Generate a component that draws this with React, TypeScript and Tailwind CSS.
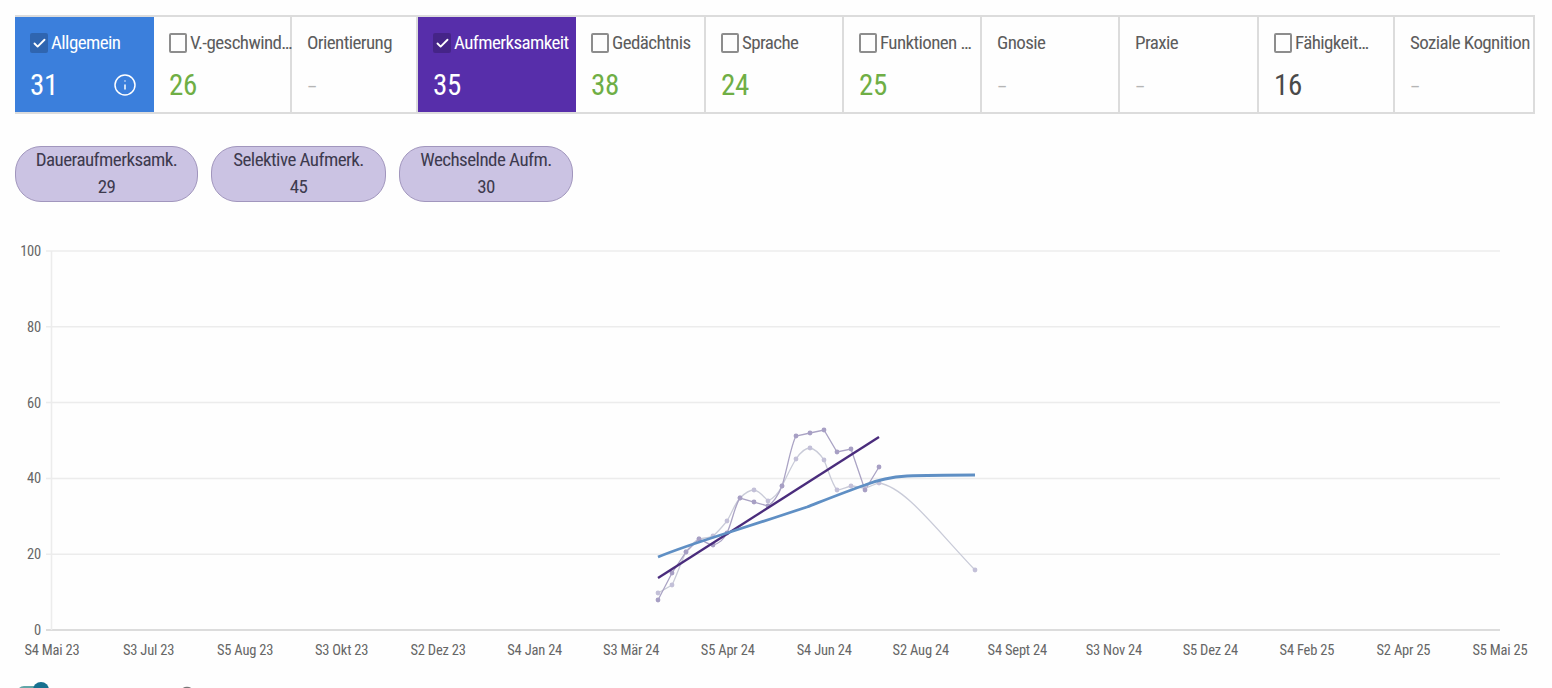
import { Check, Info } from 'lucide-react'

type Tab = {
  label: string
  value: string
  width: string
  checkbox?: boolean
  bg?: string
  valueColor?: string
}

const tabs: Tab[] = [
  { label: 'Allgemein', value: '31', width: 'w-[139px]', checkbox: true, bg: 'bg-[#3b7fdc]' },
  { label: 'V.-geschwind…', value: '26', width: 'w-[138px]', checkbox: true, valueColor: 'text-[#6fae45]' },
  { label: 'Orientierung', value: '–', width: 'w-[126px]' },
  { label: 'Aufmerksamkeit', value: '35', width: 'w-[158px]', checkbox: true, bg: 'bg-[#572eaa]' },
  { label: 'Gedächtnis', value: '38', width: 'w-[130px]', checkbox: true, valueColor: 'text-[#6fae45]' },
  { label: 'Sprache', value: '24', width: 'w-[138px]', checkbox: true, valueColor: 'text-[#6fae45]' },
  { label: 'Funktionen …', value: '25', width: 'w-[138px]', checkbox: true, valueColor: 'text-[#6fae45]' },
  { label: 'Gnosie', value: '–', width: 'w-[138px]' },
  { label: 'Praxie', value: '–', width: 'w-[139px]' },
  { label: 'Fähigkeit…', value: '16', width: 'w-[136px]', checkbox: true, valueColor: 'text-[#4a4a4a]' },
  { label: 'Soziale Kognition', value: '–', width: 'w-[140px]' },
]

const pills = [
  { label: 'Daueraufmerksamk.', value: '29', width: 'w-[183px]' },
  { label: 'Selektive Aufmerk.', value: '45', width: 'w-[175px]' },
  { label: 'Wechselnde Aufm.', value: '30', width: 'w-[174px]' },
]

const yTicks = [100, 80, 60, 40, 20, 0]
const xLabels = [
  'S4 Mai 23', 'S3 Jul 23', 'S5 Aug 23', 'S3 Okt 23', 'S2 Dez 23', 'S4 Jan 24', 'S3 Mär 24', 'S5 Apr 24',
  'S4 Jun 24', 'S2 Aug 24', 'S4 Sept 24', 'S3 Nov 24', 'S5 Dez 24', 'S4 Feb 25', 'S2 Apr 25', 'S5 Mai 25',
]

const darkDots = [
  [658, 600], [672, 573], [686, 552], [699, 539], [713, 545], [727, 533], [740, 498], [754, 502], [768, 506],
  [782, 486], [796, 436], [810, 433], [824, 430], [837, 452], [851, 449], [865, 490], [879, 467],
]
const lightDots = [
  [658, 593], [672, 585], [686, 552], [699, 539], [713, 536], [727, 521], [740, 498], [754, 490], [768, 501],
  [782, 486], [796, 459], [810, 448], [824, 460], [837, 490], [851, 486], [865, 488], [879, 483], [975, 570],
]

const darkLine =
  'M658 600 L672 573 L686 552 L699 539 C705 541 708 545 713 545 C720 543 723 540 727 533 C732 522 735 505 740 498 L754 502 L768 506 C774 502 778 496 782 486 C787 470 791 445 796 436 L810 433 L824 430 L837 452 L851 449 L865 490 L879 467'
const lightLine =
  'M658 593 L672 585 C677 575 681 562 686 552 C690 546 694 541 699 539 C704 538 708 538 713 536 C718 532 722 527 727 521 C732 513 735 503 740 498 C745 493 750 490 754 490 C760 491 764 497 768 501 C774 498 778 494 782 486 C787 476 791 467 796 459 C800 453 805 448 810 448 C816 449 820 454 824 460 C829 472 832 484 837 490 C842 490 846 487 851 486 C856 486 860 488 865 488 C870 487 874 484 879 483 C905 487 935 528 975 570'
const blueLine =
  'M658 557 C680 548 705 540 727 533 C755 524 780 516 807 507 C825 500 845 492 865 485 C875 481 890 477 907 476 C930 475 955 475 975 475'

function TabCell({ tab }: { tab: Tab }) {
  const active = !!tab.bg
  return (
    <div
      className={`relative shrink-0 ${tab.width} h-full flex flex-col pl-[15px] pt-[14px] ${
        active ? tab.bg : 'border-r-2 border-[#dcdcdc] last:border-r-0'
      }`}
    >
      <div className="flex items-center h-[24px] whitespace-nowrap">
        {tab.checkbox && (
          <span
            className={`shrink-0 mr-[3px] flex items-center justify-center w-[18px] h-[20px] rounded-[2px] ${
              active ? 'bg-black/20' : 'border-2 border-[#8d8d8d]'
            }`}
          >
            {active && <Check className="w-[15px] h-[15px] text-white" strokeWidth={3} />}
          </span>
        )}
        <span
          className={`text-[19px] tracking-[-0.6px] [font-stretch:condensed] ${active ? 'text-white' : 'text-[#5c5c5c]'}`}
        >
          {tab.label}
        </span>
      </div>
      <div
        className={`mt-[12px] h-[38px] flex items-center tracking-[-0.3px] [font-stretch:condensed] ${
          active ? 'text-white' : tab.valueColor ?? 'text-[#b5b5b5]'
        } ${tab.value === '–' ? 'text-[18px]' : 'text-[29px]'}`}
      >
        {tab.value}
      </div>
      {tab.label === 'Allgemein' && (
        <Info className="absolute left-[98px] top-[56px] w-[24px] h-[24px] text-white" strokeWidth={1.5} />
      )}
    </div>
  )
}

export default function App() {
  return (
    <div className="h-[688px] overflow-hidden bg-[#fefefe] font-['Roboto',sans-serif]">
      <div className="pt-[15px] pl-[15px]">
        <div className="flex h-[99px] w-[1520px] border-y-2 border-r-2 border-[#dcdcdc]">
          {tabs.map((tab) => (
            <TabCell key={tab.label} tab={tab} />
          ))}
        </div>

        <div className="flex gap-[13px] mt-[32px]">
          {pills.map((pill) => (
            <div
              key={pill.label}
              className={`${pill.width} h-[56px] pb-[3px] rounded-[26px] border-[1.5px] border-[#a196bd] bg-[#cbc3e3] flex flex-col items-center justify-center text-[#3d3a4e] text-[19px] tracking-[-0.55px] leading-[27px] [font-stretch:condensed]`}
            >
              <span>{pill.label}</span>
              <span>{pill.value}</span>
            </div>
          ))}
        </div>
      </div>

      <svg
        width="1552"
        height="442"
        viewBox="0 238 1552 442"
        className="block mt-[36px] [font-stretch:condensed]"
      >
        {yTicks.map((t) => {
          const y = 630 - t * 3.79
          return (
            <g key={t}>
              <line x1="46" x2="1500" y1={y} y2={y} stroke={t === 0 ? '#dcdcdc' : '#ececec'} strokeWidth={t === 0 ? 2 : 1.5} />
              <text x="41" y={y + 5} textAnchor="end" fontSize="14.5" letterSpacing="-0.2" fill="#666">
                {t}
              </text>
            </g>
          )
        })}
        <line x1="51.5" x2="51.5" y1="251" y2="630" stroke="#ececec" strokeWidth="1.5" />
        {xLabels.map((label, i) => (
          <text key={label} x={52 + i * 96.53} y="655" textAnchor="middle" fontSize="14.5" letterSpacing="-0.2" fill="#666">
            {label}
          </text>
        ))}
        <path d={lightLine} fill="none" stroke="#c9cbd8" strokeWidth="1.3" />
        <path d={darkLine} fill="none" stroke="#aaa3c4" strokeWidth="1.3" />
        {lightDots.map(([x, y]) => (
          <circle key={`l${x}`} cx={x} cy={y} r="2.4" fill="#c3c0d8" />
        ))}
        {darkDots.map(([x, y]) => (
          <circle key={`d${x}`} cx={x} cy={y} r="2.4" fill="#a79fc4" />
        ))}
        <path d="M658 578 L879 437" stroke="#4a2c7c" strokeWidth="2.4" />
        <path d={blueLine} fill="none" stroke="#5f8fc4" strokeWidth="2.8" />
      </svg>

      <div className="flex items-start pl-[17px] pt-[2px]">
        <div className="relative w-[30px] h-[14px] mt-[4px] rounded-full bg-[#62a6a8]">
          <span className="absolute left-[16px] top-[-4px] w-[16px] h-[16px] rounded-full bg-[#17708f]" />
        </div>
        <Info className="ml-[132px] mt-[4px] w-[16px] h-[16px] text-[#777]" />
      </div>
    </div>
  )
}
